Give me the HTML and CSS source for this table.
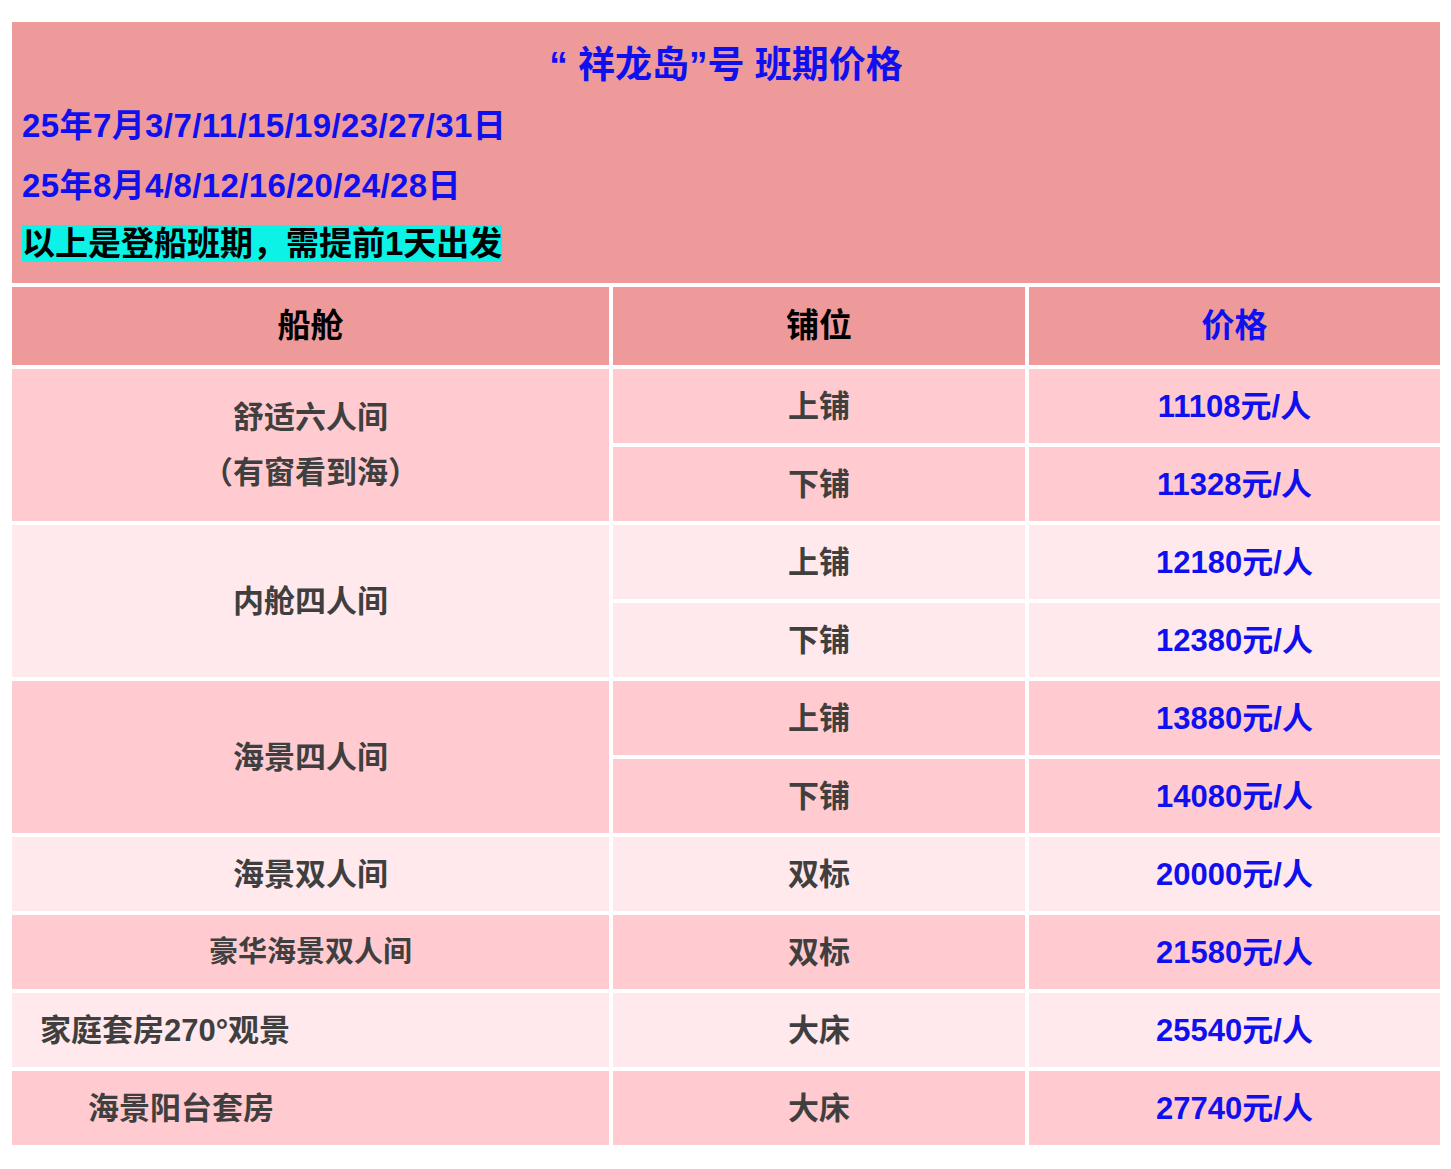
FILE: index.html
```html
<!DOCTYPE html>
<html lang="zh-CN">
<head>
<meta charset="utf-8">
<title>祥龙岛号 班期价格</title>
<link rel="stylesheet" href="styles.css">
</head>
<body>
<table class="price-table">
  <colgroup>
    <col class="c1">
    <col class="c2">
    <col class="c3">
  </colgroup>
  <thead>
    <tr>
      <td colspan="3" class="info">
        <div class="title">“ 祥龙岛”号 班期价格</div>
        <div class="date">25年7月3/7/11/15/19/23/27/31日</div>
        <div class="date">25年8月4/8/12/16/20/24/28日</div>
        <div class="note"><span class="hl">以上是登船班期，需提前1天出发</span></div>
      </td>
    </tr>
    <tr class="head">
      <th>船舱</th>
      <th>铺位</th>
      <th class="blue">价格</th>
    </tr>
  </thead>
  <tbody>
    <tr class="pink">
      <td rowspan="2" class="cabin multi"><div class="two">舒适六人间</div><div class="two">（有窗看到海）</div></td>
      <td>上铺</td>
      <td class="price">11108元/人</td>
    </tr>
    <tr class="pink">
      <td>下铺</td>
      <td class="price">11328元/人</td>
    </tr>
    <tr class="light">
      <td rowspan="2" class="cabin">内舱四人间</td>
      <td>上铺</td>
      <td class="price">12180元/人</td>
    </tr>
    <tr class="light">
      <td>下铺</td>
      <td class="price">12380元/人</td>
    </tr>
    <tr class="pink">
      <td rowspan="2" class="cabin">海景四人间</td>
      <td>上铺</td>
      <td class="price">13880元/人</td>
    </tr>
    <tr class="pink">
      <td>下铺</td>
      <td class="price">14080元/人</td>
    </tr>
    <tr class="light">
      <td class="cabin">海景双人间</td>
      <td>双标</td>
      <td class="price">20000元/人</td>
    </tr>
    <tr class="pink">
      <td class="cabin small">豪华海景双人间</td>
      <td>双标</td>
      <td class="price">21580元/人</td>
    </tr>
    <tr class="light">
      <td class="cabin left indent-a">家庭套房270°观景</td>
      <td>大床</td>
      <td class="price">25540元/人</td>
    </tr>
    <tr class="pink">
      <td class="cabin left indent-b">海景阳台套房</td>
      <td>大床</td>
      <td class="price">27740元/人</td>
    </tr>
  </tbody>
</table>
</body>
</html>
```
FILE: styles.css
```css
html, body {
  background: #ffffff;
}
body {
  margin: 8px;
  font-family: "Liberation Sans", "Noto Sans CJK SC", sans-serif;
  font-weight: bold;
}
.price-table {
  margin-top: 10px;
  width: 1436px;
  table-layout: fixed;
  border-collapse: separate;
  border-spacing: 4px;
}
.c1 { width: 597px; }
.c2 { width: 412px; }
.c3 { width: 411px; }

.info {
  background: #ee9a9a;
  padding: 14px 10px 11px 10px;
  text-align: left;
  vertical-align: top;
}
.title {
  text-align: center;
  color: #1010ee;
  font-size: 37px;
  line-height: 60px;
}
.date {
  color: #1010ee;
  font-size: 33px;
  line-height: 60px;
  letter-spacing: 0.4px;
}
.note {
  color: #000000;
  font-size: 33px;
  line-height: 56px;
}
.hl {
  background: #0cf2e6;
}
.head th {
  background: #ee9a9a;
  height: 72px;
  padding: 0 0 6px 0;
  font-size: 33px;
  color: #000000;
  text-align: center;
  vertical-align: middle;
}
.head th.blue {
  color: #1010ee;
}
tbody td {
  height: 68px;
  padding: 0 0 6px 0;
  font-size: 31px;
  color: #3f3f3f;
  text-align: center;
  vertical-align: middle;
}
tbody tr.pink td {
  background: #ffcbd0;
}
tbody tr.light td {
  background: #ffe9ec;
}
tbody td.price {
  color: #1010ee;
  font-size: 31px;
}
tbody td.multi {
  padding: 0;
}
tbody td.small {
  font-size: 29px;
}
.two {
  line-height: 55px;
}
.left {
  text-align: left;
}
tbody td.indent-a {
  padding-left: 28px;
}
tbody td.indent-b {
  padding-left: 76px;
}
```
